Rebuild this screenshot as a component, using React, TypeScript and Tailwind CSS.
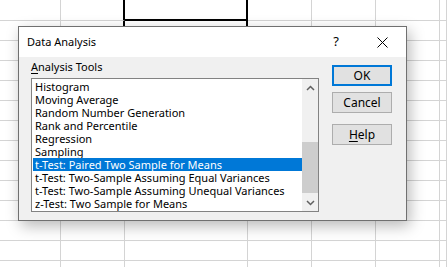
import React from "react";

const COLS = [61, 64, 123, 64, 64, 64, 7];
const ROWS = [21, 20, 20, 20, 20, 20, 20, 20, 20, 20, 20, 20, 20, 7];

const TOOLS = [
  "Histogram",
  "Moving Average",
  "Random Number Generation",
  "Rank and Percentile",
  "Regression",
  "Sampling",
  "t-Test: Paired Two Sample for Means",
  "t-Test: Two-Sample Assuming Equal Variances",
  "t-Test: Two-Sample Assuming Unequal Variances",
  "z-Test: Two Sample for Means",
];

const FONT = { fontFamily: '"Noto Sans", "Open Sans", sans-serif' };

function Sheet() {
  return (
    <div className="flex flex-col">
      {ROWS.map((h, r) => (
        <div key={r} className="flex" style={{ height: h }}>
          {COLS.map((w, c) => {
            // the selected range outline sits on the third column
            let cls = "border-r border-b border-[#d4d4d4]";
            if (c === 1 && r < 3) cls = "border-r border-b border-b-[#d4d4d4] border-r-black border-r-2";
            if (c === 2 && r === 0) cls = "border-r-2 border-b-2 border-black";
            if (c === 2 && r > 0 && r < 3) cls = "border-r-2 border-b border-r-black border-b-[#d4d4d4]";
            return <div key={c} className={`shrink-0 bg-white ${cls}`} style={{ width: w }} />;
          })}
        </div>
      ))}
    </div>
  );
}

function Chevron({ down }: { down?: boolean }) {
  return (
    <svg width="9" height="6" viewBox="0 0 9 6" className={down ? "rotate-180" : ""}>
      <path d="M1 5 L4.5 1.5 L8 5" fill="none" stroke="#606060" strokeWidth="1.5" />
    </svg>
  );
}

function Button({ children, primary }: { children: React.ReactNode; primary?: boolean }) {
  return (
    <div
      className={
        primary
          ? "h-[21px] w-[60px] flex items-center justify-center bg-[#e1e1e1] border-2 border-[#0078d7] text-[12px] text-black"
          : "h-[21px] w-[60px] flex items-center justify-center bg-[#e1e1e1] border border-[#adadad] text-[12px] text-black"
      }
    >
      {children}
    </div>
  );
}

export default function App() {
  return (
    <div className="relative w-[447px] h-[267px] overflow-hidden bg-white" style={FONT}>
      <Sheet />

      <div className="absolute left-[18px] top-[26px] w-[389px] h-[195px] border border-[#707070] bg-[#f0f0f0] shadow-[3px_5px_14px_rgba(0,0,0,0.28)] flex flex-col">
        <div className="h-[30px] bg-white flex items-center pl-[8px] pr-[18px] text-[11px] text-black">
          <span className="flex-1">Data Analysis</span>
          <span className="text-[13px] mr-[38px]">?</span>
          <svg width="11" height="11" viewBox="0 0 11 11">
            <path d="M0.5 0.5 L10.5 10.5 M10.5 0.5 L0.5 10.5" stroke="#000" strokeWidth="1" />
          </svg>
        </div>

        <div className="flex pl-[12px] text-[11px] text-black">
          <div className="flex flex-col pt-[2px]">
            <div className="h-[16px] leading-[16px]">
              <span className="underline underline-offset-2">A</span>nalysis Tools
            </div>
            <div className="mt-[3px] w-[288px] h-[134px] border border-[#828282] bg-white flex">
              <div className="flex-1 flex flex-col pt-[1px] pl-[1px]">
                {TOOLS.map((t, i) => (
                  <div
                    key={t}
                    className={
                      i === 6
                        ? "h-[13px] leading-[13px] pl-[2px] whitespace-nowrap bg-[#0078d7] text-white"
                        : "h-[13px] leading-[13px] pl-[2px] whitespace-nowrap"
                    }
                  >
                    {t}
                  </div>
                ))}
              </div>
              <div className="w-[16px] bg-[#f0f0f0] flex flex-col items-center">
                <div className="h-[17px] flex items-center justify-center">
                  <Chevron />
                </div>
                <div className="flex-1 w-full flex flex-col justify-end">
                  <div className="h-[51px] w-full bg-[#cdcdcd] mb-[1px]" />
                </div>
                <div className="h-[17px] flex items-center justify-center">
                  <Chevron down />
                </div>
              </div>
            </div>
          </div>

          <div className="flex flex-col ml-[13px] pt-[8px]">
            <Button primary>OK</Button>
            <div className="mt-[6px]">
              <Button>Cancel</Button>
            </div>
            <div className="mt-[11px]">
              <Button>
                <span>
                  <span className="underline underline-offset-2">H</span>elp
                </span>
              </Button>
            </div>
          </div>
        </div>
      </div>
    </div>
  );
}
